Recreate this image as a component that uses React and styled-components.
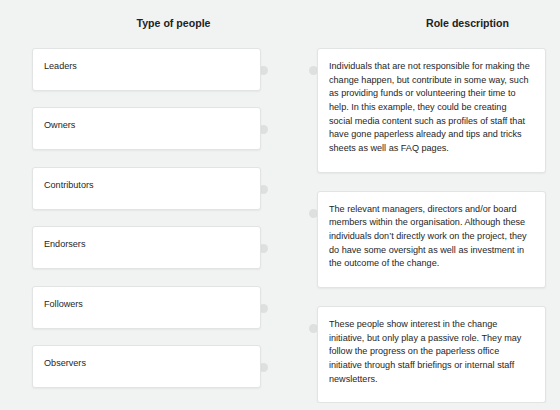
import React from 'react';
import styled, { createGlobalStyle } from 'styled-components';

const GlobalStyle = createGlobalStyle`
  html {
    background: #f1f2f2;
  }

  body {
    margin: 0;
    font-family: "Liberation Sans", Arial, sans-serif;
    color: #262626;
  }
`;

const Board = styled.div`
  display: grid;
  grid-template-columns: 229px 229px;
  column-gap: 56px;
  padding: 15px 0 0 32px;
`;

const Column = styled.div`
  display: flex;
  flex-direction: column;
`;

const ColumnTitle = styled.h2`
  margin: 0 0 17px;
  padding-left: ${props => props.$shift * 2}px;
  font-size: 10.6px;
  line-height: 16px;
  font-weight: bold;
  text-align: center;
  color: #222;
`;

const CardList = styled.div`
  display: flex;
  flex-direction: column;
  gap: ${props => props.$gap}px;
`;

const Card = styled.div`
  position: relative;
  box-sizing: border-box;
  background: #fff;
  border: 1px solid #e2e3e3;
  border-radius: 3px;
  box-shadow: 0 1px 2px rgba(0, 0, 0, 0.05);
  padding: 11px 13px 16px 11px;
  font-size: 9.1px;
  line-height: 13.65px;
`;

const TypeCard = styled(Card)`
  height: 43px;
`;

const Handle = styled.span`
  position: absolute;
  top: 17px;
  ${props => (props.$side === 'right' ? 'right: -8px;' : 'left: -9px;')}
  width: 9px;
  height: 9px;
  border-radius: 50%;
  background: #dedfdf;
  z-index: -1;
`;

const types = ['Leaders', 'Owners', 'Contributors', 'Endorsers', 'Followers', 'Observers'];

const roles = [
  'Individuals that are not responsible for making the change happen, but contribute in some way, such as providing funds or volunteering their time to help. In this example, they could be creating social media content such as profiles of staff that have gone paperless already and tips and tricks sheets as well as FAQ pages.',
  'The relevant managers, directors and/or board members within the organisation. Although these individuals don\u2019t directly work on the project, they do have some oversight as well as investment in the outcome of the change.',
  'These people show interest in the change initiative, but only play a passive role. They may follow the progress on the paperless office initiative through staff briefings or internal staff newsletters.'
];

export default function App() {
  return (
    <>
      <GlobalStyle />
      <Board>
        <Column>
          <ColumnTitle $shift={27}>Type of people</ColumnTitle>
          <CardList $gap={16.4}>
            {types.map(type => (
              <TypeCard key={type}>
                {type}
                <Handle $side="right" />
              </TypeCard>
            ))}
          </CardList>
        </Column>
        <Column>
          <ColumnTitle $shift={36}>Role description</ColumnTitle>
          <CardList $gap={18}>
            {roles.map(role => (
              <Card key={role.slice(0, 12)}>
                {role}
                <Handle $side="left" />
              </Card>
            ))}
          </CardList>
        </Column>
      </Board>
    </>
  );
}
